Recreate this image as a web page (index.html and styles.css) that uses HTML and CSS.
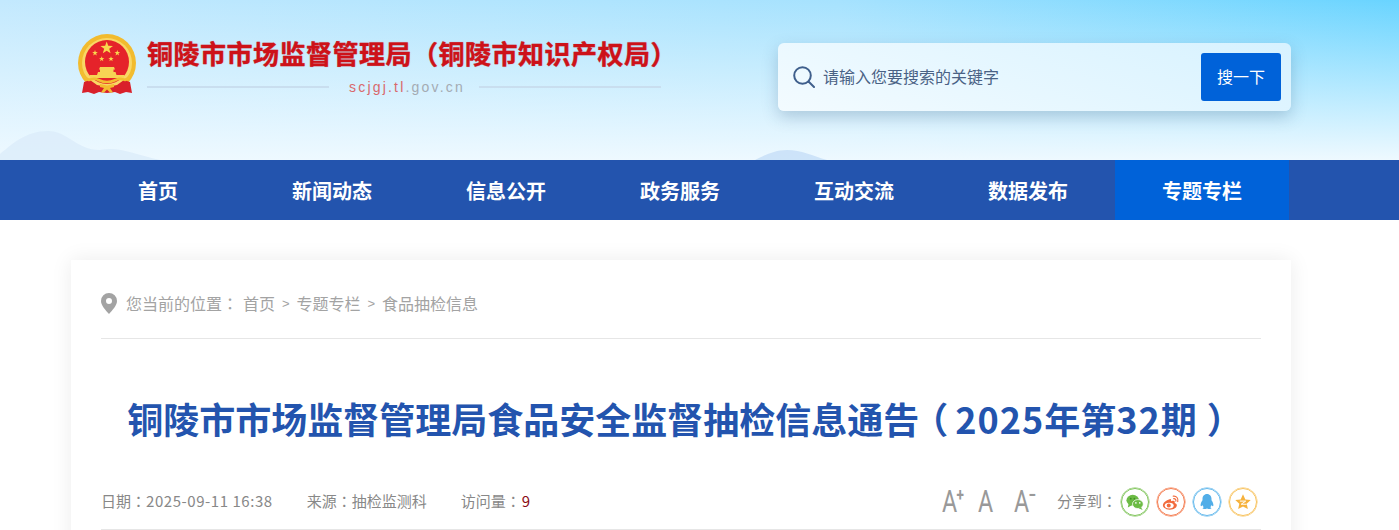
FILE: index.html
```html
<!DOCTYPE html>
<html lang="zh-CN">

<head>
    <meta charset="UTF-8">
    <meta name="viewport" content="width=device-width, initial-scale=1.0">
    <title>铜陵市市场监督管理局食品安全监督抽检信息通告（2025年第32期）</title>
    <link rel="stylesheet" href="styles.css">
</head>

<body>
    <header class="header">
        <svg class="hill hill-left" viewBox="0 0 160 30" preserveAspectRatio="none">
            <path d="M0 30 L0 24 C12 14 26 1 48 1 C68 1 76 20 100 20 C118 16 134 24 160 30 Z" />
        </svg>
        <svg class="hill hill-mid" viewBox="0 0 72 10" preserveAspectRatio="none">
            <path d="M0 10 C10 5 20 0 32 0 C46 0 58 6 72 10 Z" />
        </svg>
        <div class="header-inner">
            <div class="logo">
                <svg class="emblem" viewBox="0 0 58 62">
                    <defs>
                        <path id="star" d="M0-10l2.350 6.760 7.160.15-5.700 4.330 2.070 6.850L0 4l-5.880 4.090 2.070-6.850-5.700-4.330 7.160-.15z" />
                    </defs>
                    <circle cx="29" cy="29" r="29" fill="#f2bb2e" />
                    <circle cx="29" cy="29" r="25" fill="#f9d765" />
                    <circle cx="29" cy="28" r="22" fill="#e5232a" />
                    <g fill="#f8d84e">
                        <use href="#star" transform="translate(28.700 14) scale(.66)" />
                        <use href="#star" transform="translate(17 19) scale(.3)" />
                        <use href="#star" transform="translate(39.300 19) scale(.3)" />
                        <use href="#star" transform="translate(23.700 25) scale(.28)" />
                        <use href="#star" transform="translate(33 25) scale(.28)" />
                    </g>
                    <path fill="#f7d354" d="M22 33h14l1 2.500h-1.500V38h2l1 3H19l1-3h2v-2.500H21z" />
                    <path fill="#f7d354" d="M12 41h34v3H12z" />
                    <path fill="#d9202a" d="M6 48l6-2 7 5 10 2 10-2 7-5 6 2 2 11-6-1-6 2-5-2-8 1-8-1-5 2-6-2-6 1z" />
                    <path fill="none" stroke="#f3bd30" stroke-width="2.600" stroke-linejoin="round" d="M3 38c2 3 4 6 8 8 3-1 5-2 7-1 3 1 6 3 11 3s8-2 11-3c2-1 4 0 7 1 4-2 6-5 8-8" />
                    <path fill="#f3bd30" d="M22 50l7 1.500 7-1.500v3l-4 1 3 4.500h-3l-3-3-3 3h-3l3-4.500-4-1z" />
                </svg>
                <div class="logo-text">
                    <h1 class="site-name">铜陵市市场监督管理局（铜陵市知识产权局）</h1>
                    <div class="domain-row">
                        <span class="domain-line"></span>
                        <span class="domain"><em>scjgj.tl</em>.gov.cn</span>
                        <span class="domain-line"></span>
                    </div>
                </div>
            </div>
            <form class="search">
                <svg class="search-icon" viewBox="0 0 22 22">
                    <circle cx="9.500" cy="9.500" r="8.300" />
                    <path d="M15.500 15.500L21 21" />
                </svg>
                <input class="search-input" type="text" placeholder="请输入您要搜索的关键字">
                <button class="search-btn" type="button">搜一下</button>
            </form>
        </div>
    </header>

    <nav class="nav">
        <div class="nav-inner">
            <a class="nav-item" href="#">首页</a>
            <a class="nav-item" href="#">新闻动态</a>
            <a class="nav-item" href="#">信息公开</a>
            <a class="nav-item" href="#">政务服务</a>
            <a class="nav-item" href="#">互动交流</a>
            <a class="nav-item" href="#">数据发布</a>
            <a class="nav-item active" href="#">专题专栏</a>
        </div>
    </nav>

    <main class="card">
        <div class="crumbs">
            <svg class="pin" viewBox="0 0 16 21">
                <path fill-rule="evenodd" d="M8 0a8 8 0 0 1 8 8c0 4.500-4.500 9-8 13-3.500-4-8-8.500-8-13a8 8 0 0 1 8-8zm0 5a3 3 0 1 0 0 6 3 3 0 0 0 0-6z" />
            </svg>
            <span class="crumb-label">您当前的位置<span class="punct" lang="zh-TW">：</span></span>
            <a href="#">首页</a>
            <span class="sep">&gt;</span>
            <a href="#">专题专栏</a>
            <span class="sep">&gt;</span>
            <a href="#">食品抽检信息</a>
        </div>

        <h2 class="article-title">铜陵市市场监督管理局食品安全监督抽检信息通告<span class="paren paren-open">（</span><span class="num">2025</span>年第<span class="num">32</span>期<span class="paren paren-close">）</span></h2>

        <div class="meta">
            <div class="meta-left">
                <span>日期<span class="punct" lang="zh-TW">：</span><span class="date">2025-09-11 16:38</span></span>
                <span>来源<span class="punct" lang="zh-TW">：</span>抽检监测科</span>
                <span>访问量<span class="punct" lang="zh-TW">：</span><span class="count">9</span></span>
            </div>
            <div class="meta-right">
                <div class="font-sizes">
                    <span class="font-a">A<sup>+</sup></span>
                    <span class="font-a">A</span>
                    <span class="font-a">A<sup>−</sup></span>
                </div>
                <span class="share-label">分享到<span class="punct" lang="zh-TW">：</span></span>
                <a class="share wechat" href="#">
                    <svg viewBox="0 0 20 20">
                        <ellipse cx="7.500" cy="8" rx="7" ry="6" fill="#6cbb45" />
                        <path d="M3 11.500l-1 4.500 4.500-2.500z" fill="#6cbb45" />
                        <ellipse cx="13.200" cy="12.300" rx="6" ry="5" fill="#6cbb45" stroke="#fff" stroke-width=".8" />
                        <path d="M16.500 15.500l2 3.500-4.500-2z" fill="#6cbb45" />
                        <circle cx="5.300" cy="6.300" r="1" fill="#3f8f25" />
                        <circle cx="9.300" cy="6.300" r="1" fill="#3f8f25" />
                        <circle cx="11" cy="11" r=".9" fill="#fff" />
                        <circle cx="15.300" cy="11" r=".9" fill="#fff" />
                    </svg>
                </a>
                <a class="share weibo" href="#">
                    <svg viewBox="0 0 20 20">
                        <path d="M8.500 7C4.500 8 1 11 1 14c0 2.500 3.500 4.500 7.500 4.500 4.500 0 8-2.500 8-5 0-1.500-1.500-2.300-2.500-2.500.7-1.500.2-2.700-2-2.500l-2 .6c.3-1.500 0-2.800-1.500-2.100z" fill="#f26b3d" />
                        <ellipse cx="8" cy="14" rx="5" ry="3.300" fill="#fff" />
                        <circle cx="7.500" cy="14" r="2.200" fill="#f26b3d" />
                        <path d="M12.500 3.500c3.500-.5 6 2.500 5 6M13 6.300c1.800-.2 2.800 1.200 2.400 2.800" fill="none" stroke="#f26b3d" stroke-width="1.300" stroke-linecap="round" />
                    </svg>
                </a>
                <a class="share qq" href="#">
                    <svg viewBox="0 0 20 20">
                        <path d="M10 1c3.300 0 5 2.600 5 5.500v1.500c1.300 2 2.500 4 2 6.500-.8.500-1.500-.5-2-1.200-.2 1-.7 1.800-1.500 2.400 1 .4 1.600 1 1.300 1.600-.4.700-3 .7-4.800-.2-1.800.9-4.400.9-4.800.2-.3-.6.3-1.200 1.300-1.600-.8-.6-1.300-1.400-1.500-2.400-.5.700-1.200 1.700-2 1.200-.5-2.500.7-4.500 2-6.500V6.500C5 3.600 6.700 1 10 1z" fill="#52aee8" />
                    </svg>
                </a>
                <a class="share fav" href="#">
                    <svg viewBox="0 0 20 20">
                        <path d="M10 1.500l2.600 5.600 6 .7-4.500 4.100 1.300 6L10 15l-5.400 2.900 1.300-6L1.400 7.800l6-.7z" fill="#f6b23c" />
                        <path d="M6.500 9h6.500l-5 3.500h6" fill="none" stroke="#fff" stroke-width="1.100" />
                    </svg>
                </a>
            </div>
        </div>
    </main>
</body>

</html>
```

FILE: styles.css
```css
* {
    box-sizing: border-box;
}

html,
body {
    height: 100%;
    overflow: hidden;
}

body {
    margin: 0;
    background-color: #fff;
    font-family: "Noto Sans CJK SC", "Noto Sans", sans-serif;
}

a {
    color: inherit;
    text-decoration: none;
}

.punct {
    font-family: "Noto Sans CJK TC", sans-serif;
}

.header {
    position: relative;
    height: 160px;
    background: linear-gradient(to bottom, rgba(240, 249, 255, 0) 0%, #eef9ff 100%), linear-gradient(to right, #c3e9fe 0%, #a6e2fe 60%, #69d4ff 100%);
}

.hill {
    position: absolute;
    fill: #dcedfb;
    opacity: .8;
}

.hill-left {
    left: 0;
    bottom: 0;
    width: 160px;
    height: 30px;
}

.hill-mid {
    left: 755px;
    bottom: 0;
    width: 72px;
    height: 10px;
    fill: #c6dff8;
}

.header-inner {
    position: relative;
    width: 1220px;
    height: 100%;
    margin-left: 71px;
    display: flex;
    justify-content: space-between;
    padding: 34px 0 0 7px;
}

.logo {
    display: flex;
    align-items: flex-start;
}

.emblem {
    width: 58px;
    height: 62px;
    margin-right: 11px;
}

.logo-text {
    margin-top: -1px;
}

.site-name {
    margin: 0;
    width: 520px;
    font-size: 26px;
    line-height: 40px;
    letter-spacing: .5px;
    font-weight: 700;
    color: #cd1219;
    white-space: nowrap;
    -webkit-text-stroke: .3px #cd1219;
    text-shadow: 0 0 1px rgba(205, 18, 25, .5);
}

.domain-row {
    display: flex;
    align-items: center;
    gap: 20px;
    width: 514px;
    margin-top: 2px;
}

.domain-line {
    flex: 1;
    height: 2px;
    background-color: #c9deef;
}

.domain {
    width: 110px;
    font-family: "Liberation Sans", sans-serif;
    font-size: 14px;
    line-height: 24px;
    letter-spacing: 2.2px;
    color: #a4abb3;
    white-space: nowrap;
}

.domain em {
    font-style: normal;
    color: #d9686c;
}

.search {
    width: 513px;
    height: 68px;
    margin-top: 9px;
    padding: 0 10px 0 15px;
    display: flex;
    align-items: center;
    border-radius: 6px;
    background: linear-gradient(20deg, #f3fbff 0%, #d7f2ff 100%);
    box-shadow: 0 6px 16px rgba(40, 80, 120, .25);
}

.search-icon {
    width: 22px;
    height: 22px;
    margin-right: 8px;
    fill: none;
    stroke: #3f5f8c;
    stroke-width: 2;
    stroke-linecap: round;
}

.search-input {
    flex: 1;
    border: none;
    outline: none;
    background: transparent;
    padding: 0 0 2px;
    font-family: inherit;
    font-size: 16px;
    color: #4a6285;
}

.search-input::placeholder {
    color: #4a6285;
    opacity: 1;
}

.search-btn {
    width: 80px;
    height: 48px;
    border: none;
    border-radius: 3px;
    padding: 0 0 2px;
    background-color: #0062d9;
    color: #fff;
    font-family: inherit;
    font-size: 16px;
}

.nav {
    height: 60px;
    background-color: #2354ae;
}

.nav-inner {
    width: 1218px;
    height: 100%;
    margin-left: 71px;
    display: grid;
    grid-template-columns: repeat(7, 1fr);
}

.nav-item {
    display: flex;
    align-items: center;
    justify-content: center;
    color: #fff;
    font-size: 20px;
    font-weight: 700;
}

.nav-item.active {
    background-color: #0062d9;
}

.card {
    width: 1220px;
    height: 400px;
    margin: 40px 0 0 71px;
    padding: 20px 30px 0;
    background-color: #fff;
    box-shadow: 0 0 20px rgba(0, 0, 0, .08);
}

.crumbs {
    height: 59px;
    padding-bottom: 12px;
    display: flex;
    align-items: center;
    border-bottom: 1px solid #e6e6e6;
    font-size: 16px;
    color: #a3a3a3;
}

.pin {
    width: 16px;
    height: 21px;
    margin-right: 9px;
    fill: #a3a3a3;
}

.crumb-label {
    margin-right: 5px;
}

.sep {
    font-family: "Liberation Sans", sans-serif;
    font-size: 13px;
    width: 21.5px;
    text-align: center;
}

.article-title {
    margin: 0;
    padding: 52px 2px 2px 0;
    font-size: 36px;
    line-height: 54px;
    font-weight: 700;
    color: #2354ae;
    text-align: center;
    white-space: nowrap;
}

/* half-width brackets, spaced so they sit mid-box as in the original */
.paren {
    font-feature-settings: "halt";
}

.paren-open {
    margin: 0 7px 0 11px;
}

.paren-close {
    margin: 0 8px 0 10px;
}

.num {
    letter-spacing: 1px;
}

.meta {
    height: 56px;
    margin-top: 27px;
    display: flex;
    align-items: center;
    justify-content: space-between;
    border-bottom: 1px solid #e6e6e6;
    font-size: 15px;
    color: #888;
}

.meta-left {
    display: flex;
    gap: 34px;
    padding-bottom: 2px;
}

.date {
    letter-spacing: .55px;
}

.count {
    margin-left: 1px;
    color: #8b0a14;
}

.meta-right {
    display: flex;
    align-items: center;
    padding-right: 4px;
}

.font-sizes {
    display: flex;
    gap: 15px;
    margin-right: 22px;
}

.font-a {
    display: block;
    width: 21px;
    font-family: Roboto, sans-serif;
    font-size: 31px;
    line-height: 30px;
    color: #999;
    white-space: nowrap;
    transform: scaleX(.75);
    transform-origin: left center;
}

.font-a sup {
    font-size: 18px;
    font-weight: 700;
    line-height: 0;
    vertical-align: 11px;
    margin-left: -1px;
}

.share-label {
    margin-right: 4px;
    padding-bottom: 2px;
}

.share {
    width: 28px;
    height: 28px;
    margin-left: 8px;
    display: flex;
    align-items: center;
    justify-content: center;
    border: 1px solid;
    border-radius: 50%;
    box-shadow: 0 0 0 .5px;
}

.share:first-of-type {
    margin-left: 0;
}

.share svg {
    width: 18px;
    height: 18px;
}

.wechat {
    color: #7fc45a;
}

.weibo {
    color: #f47a4d;
}

.qq {
    color: #62b8ec;
}

.fav {
    color: #f8c25c;
}
```
